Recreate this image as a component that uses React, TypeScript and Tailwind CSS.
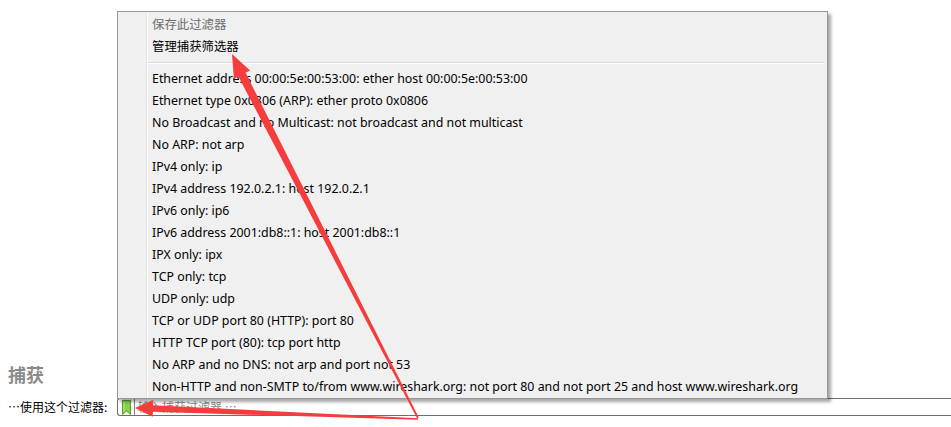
const filters = [
  "Ethernet address 00:00:5e:00:53:00: ether host 00:00:5e:00:53:00",
  "Ethernet type 0x0806 (ARP): ether proto 0x0806",
  "No Broadcast and no Multicast: not broadcast and not multicast",
  "No ARP: not arp",
  "IPv4 only: ip",
  "IPv4 address 192.0.2.1: host 192.0.2.1",
  "IPv6 only: ip6",
  "IPv6 address 2001:db8::1: host 2001:db8::1",
  "IPX only: ipx",
  "TCP only: tcp",
  "UDP only: udp",
  "TCP or UDP port 80 (HTTP): port 80",
  "HTTP TCP port (80): tcp port http",
  "No ARP and no DNS: not arp and port not 53",
  "Non-HTTP and non-SMTP to/from www.wireshark.org: not port 80 and not port 25 and host www.wireshark.org",
];

const font = "font-['Microsoft_YaHei','Noto_Sans','Noto_Sans_CJK_SC',sans-serif]";

function MenuItem({ label, disabled }: { label: string; disabled?: boolean }) {
  return (
    <div className="flex h-[22px] items-center">
      <div className="w-[28px] self-stretch" />
      <div className="w-px self-stretch bg-[#e2e3e3]" />
      <div className="w-px self-stretch bg-white" />
      <span className={`pl-[4px] text-[12.4px] whitespace-nowrap ${disabled ? "text-[#6d6d6d]" : "text-black"}`}>
        {label}
      </span>
    </div>
  );
}

function Bookmark() {
  return (
    <svg width="9" height="15" viewBox="0 0 9 15">
      <path d="M0.5 0.5 H8.5 V14.5 L4.5 11 L0.5 14.5 Z" fill="#86d048" stroke="#5aa02c" />
      <path d="M2 1.5 V11.5" stroke="#b5ea84" />
    </svg>
  );
}

export default function App() {
  return (
    <div className={`relative w-[951px] h-[427px] bg-white overflow-hidden ${font}`}>
      {/* capture section */}
      <div className="flex flex-col pt-[363px] pl-[8px]">
        <h2 className="text-[18px] leading-[24px] font-bold text-[#8a8a8a]">捕获</h2>
        <div className="mt-[11px] flex items-center h-[18px]">
          <span lang="zh-CN" className="w-[109px] text-[12px] text-black whitespace-nowrap font-['Noto_Sans_CJK_SC',sans-serif]">
            …使用这个过滤器:
          </span>
          <div className="flex-1 h-[18px] flex items-center border border-r-0 border-[#6f6f6f] rounded-l-[3px]">
            <div className="w-[17px] flex justify-center items-center border-r border-[#8a8a8a] h-full">
              <Bookmark />
            </div>
            <span lang="zh-CN" className="pl-[3px] text-[12px] text-[#8a8a8a] whitespace-nowrap font-['Noto_Sans_CJK_SC',sans-serif]">
              输入捕获过滤器 …
            </span>
          </div>
        </div>
      </div>

      {/* popup menu */}
      <div className="absolute left-[117px] top-[11px] w-[711px] bg-[#f0f0f0] border border-[#979797] shadow-[3px_3px_3px_rgba(0,0,0,0.35)] pt-[2px]">
        <MenuItem label="保存此过滤器" disabled />
        <MenuItem label="管理捕获筛选器" />
        <div className="flex h-[10px] items-center">
          <div className="w-[28px] self-stretch" />
          <div className="w-px self-stretch bg-[#e2e3e3]" />
          <div className="w-px self-stretch bg-white" />
          <div className="flex-1 mr-[3px] flex flex-col">
            <div className="h-px bg-[#dadada]" />
            <div className="h-px bg-white" />
          </div>
        </div>
        {filters.map((f) => (
          <MenuItem key={f} label={f} />
        ))}
      </div>

      {/* annotation arrows */}
      <svg className="absolute inset-0 pointer-events-none" width="951" height="427">
        <polygon
          points="418.8,417.6 245.6,72.8 250.1,70.4 232,54 233.9,78.8 238.4,76.5 417.2,418.4"
          fill="#f53d3d"
        />
        <polygon
          points="418,418.2 153.1,405.2 153.3,399.8 135,408 152.7,416.8 152.9,411.8 418,419.8"
          fill="#f53d3d"
        />
      </svg>
    </div>
  );
}
